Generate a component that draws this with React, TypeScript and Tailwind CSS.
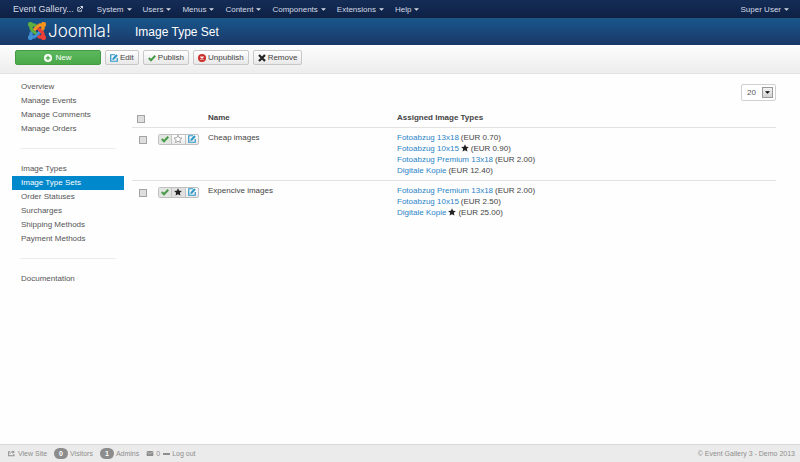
import React from "react";

type IconProps = { className?: string };

function JoomlaMark({ className }: IconProps) {
  const arm =
    "M16.719 14.759L14.22 17.26l-2.37 2.37-.462.466c-1.368 1.365-3.297 1.83-5.047 1.397-.327 1.424-1.604 2.49-3.13 2.49C1.438 23.983 0 22.547 0 20.772c0-1.518 1.055-2.789 2.469-3.123-.446-1.76.016-3.705 1.396-5.08l.179-.18 2.37 2.37-.184.181c-.769.779-.769 2.024 0 2.789.771.78 2.022.78 2.787.015l.465-.465 2.367-2.371 2.502-2.506 2.368 2.372z";
  return (
    <svg viewBox="0 0 24 24" className={className} strokeWidth="1.2" aria-hidden="true">
      <path d={arm} fill="#3f8fd6" stroke="#3f8fd6" />
      <path d={arm} fill="#5fae3f" stroke="#5fae3f" transform="rotate(90 12 12)" />
      <path d={arm} fill="#f7941e" stroke="#f7941e" transform="rotate(180 12 12)" />
      <path d={arm} fill="#ee4035" stroke="#ee4035" transform="rotate(270 12 12)" />
    </svg>
  );
}

function PlusCircle({ className }: IconProps) {
  return (
    <svg viewBox="0 0 16 16" className={className} aria-hidden="true">
      <circle cx="8" cy="8" r="8" fill="currentColor" />
      <path d="M3.5 8h9M8 3.5v9" stroke="#4fae4f" strokeWidth="2.6" />
    </svg>
  );
}

function EditIcon({ className }: IconProps) {
  return (
    <svg viewBox="0 0 16 16" className={className} fill="none" aria-hidden="true">
      <path d="M10 1.500H1.500v13h13V8" stroke="#2a96c8" strokeWidth="2.4" />
      <path d="M4.500 12l1-4L12.500.5l3 3-7 7.500z" fill="#2a96c8" />
    </svg>
  );
}

function CheckIcon({ className }: IconProps) {
  return (
    <svg viewBox="0 0 16 16" className={className} fill="none" aria-hidden="true">
      <path d="M1.500 8L6 12.500 14.500 3.500" stroke="#4a9a4a" strokeWidth="4" />
    </svg>
  );
}

function CancelIcon({ className }: IconProps) {
  return (
    <svg viewBox="0 0 16 16" className={className} aria-hidden="true">
      <circle cx="8" cy="8" r="8" fill="#c9302c" />
      <path d="M5 5l6 6M11 5l-6 6" stroke="#fff" strokeWidth="2.6" />
    </svg>
  );
}

function CrossIcon({ className }: IconProps) {
  return (
    <svg viewBox="0 0 16 16" className={className} aria-hidden="true">
      <path d="M2 2l12 12M14 2L2 14" stroke="#222" strokeWidth="4.4" />
    </svg>
  );
}

function StarIcon({ className, hollow }: IconProps & { hollow?: boolean }) {
  return (
    <svg viewBox="0 0 16 16" className={className} aria-hidden="true">
      <path
        d="M8 .4l2.300 5 5.500.6-4.100 3.700 1.200 5.500L8 12.500l-4.900 2.700 1.200-5.500L.2 6l5.500-.6z"
        fill={hollow ? "#fff" : "#222"}
        stroke={hollow ? "#888" : "none"}
        strokeWidth="1.4"
      />
    </svg>
  );
}

function OutIcon({ className }: IconProps) {
  return (
    <svg viewBox="0 0 16 16" className={className} fill="none" stroke="currentColor" aria-hidden="true">
      <path d="M7 4H2v10h10V9.5" strokeWidth="2.400" />
      <path d="M6.5 9.5L13 3" strokeWidth="2.600" />
      <path d="M8 0h8v8z" fill="currentColor" stroke="none" />
    </svg>
  );
}

function ShareIcon({ className }: IconProps) {
  return (
    <svg viewBox="0 0 16 16" className={className} fill="none" stroke="currentColor" aria-hidden="true">
      <path d="M5 4H1.500v9h12v-4" strokeWidth="2.4" />
      <path d="M5 8c1-3 3-3.500 6-3.500" strokeWidth="2" />
      <path d="M10 1l6 3.500-6 4z" fill="currentColor" stroke="none" />
    </svg>
  );
}

function MailIcon({ className }: IconProps) {
  return (
    <svg viewBox="0 0 16 12" className={className} aria-hidden="true">
      <rect width="16" height="12" rx="1.500" fill="currentColor" />
      <path d="M1 2l7 5 7-5" fill="none" stroke="#ebebeb" strokeWidth="1.200" />
    </svg>
  );
}

function Caret({ className }: IconProps) {
  return (
    <svg viewBox="0 0 8 4" className={className} aria-hidden="true">
      <path d="M0 0h8L4 4z" fill="currentColor" />
    </svg>
  );
}

const menus = ["System", "Users", "Menus", "Content", "Components", "Extensions", "Help"];

const sideGroups = [
  ["Overview", "Manage Events", "Manage Comments", "Manage Orders"],
  ["Image Types", "Image Type Sets", "Order Statuses", "Surcharges", "Shipping Methods", "Payment Methods"],
  ["Documentation"],
];

type ImageType = { name: string; price: string; isDefault?: boolean };

const sets: { name: string; isDefault: boolean; types: ImageType[] }[] = [
  {
    name: "Cheap images",
    isDefault: false,
    types: [
      { name: "Fotoabzug 13x18", price: "(EUR 0.70)" },
      { name: "Fotoabzug 10x15", price: "(EUR 0.90)", isDefault: true },
      { name: "Fotoabzug Premium 13x18", price: "(EUR 2.00)" },
      { name: "Digitale Kopie", price: "(EUR 12.40)" },
    ],
  },
  {
    name: "Expencive images",
    isDefault: true,
    types: [
      { name: "Fotoabzug Premium 13x18", price: "(EUR 2.00)" },
      { name: "Fotoabzug 10x15", price: "(EUR 2.50)" },
      { name: "Digitale Kopie", price: "(EUR 25.00)", isDefault: true },
    ],
  },
];

function ToolButton({ icon, label }: { icon: React.ReactNode; label: string }) {
  return (
    <button
      type="button"
      className="flex h-[15px] items-center gap-[2px] rounded-xs border border-[#c8c8c8] bg-linear-to-b from-white to-[#e8e8e8] px-1 text-[#444]"
    >
      {icon}
      {label}
    </button>
  );
}

function Tick({ label }: { label: string }) {
  return (
    <input
      type="checkbox"
      aria-label={label}
      className="block size-2 appearance-none border border-[#a4a4a4] bg-[#dedede] checked:bg-[#0088cc]"
    />
  );
}

export default function App() {
  return (
    <div className="flex min-h-screen flex-col bg-[#fefefe] font-['Liberation_Sans',Arial,sans-serif] text-[8px] leading-[11px] text-[#444]">
      <nav className="flex h-[18px] items-center bg-linear-to-b from-[#142c56] to-[#0e2145] pr-[11px] pl-[13px] text-[#d5dbe6]">
        <a href="#" className="flex items-center gap-[3px] text-[9px]">
          Event Gallery...
          <OutIcon className="size-[6px]" />
        </a>
        <ul className="ml-[14px] flex gap-[11px]">
          {menus.map((m) => (
            <li key={m}>
              <a href="#" className="flex items-center gap-[3px]">
                {m}
                <Caret className="h-[3px] w-[5px]" />
              </a>
            </li>
          ))}
        </ul>
        <a href="#" className="ml-auto flex items-center gap-[3px]">
          Super User
          <Caret className="h-[3px] w-[5px]" />
        </a>
      </nav>

      <header className="flex h-[27px] items-center border-t border-[#24587f] bg-linear-to-b from-[#17568c] to-[#1a3867] pl-[28px] text-white">
        <a href="#" className="flex w-[107px] items-center gap-[2px] pb-[3px]">
          <JoomlaMark className="size-[18px]" />
          <span className="font-[Inter,sans-serif] text-[17px] leading-[18px] font-light">Joomla!</span>
        </a>
        <h1 className="text-[12px] leading-[14px]">Image Type Set</h1>
      </header>

      <div className="flex h-[29px] items-start gap-1 border-b border-[#e2e2e2] bg-linear-to-b from-[#fdfdfd] to-[#ededed] pt-[5px] pl-[15px]">
        <button
          type="button"
          className="flex h-[15px] w-[86px] items-center justify-center gap-[3px] rounded-xs border border-[#459a45] bg-linear-to-b from-[#5cb85c] to-[#4aa84a] text-white"
        >
          <PlusCircle className="size-[8px]" />
          New
        </button>
        <ToolButton icon={<EditIcon className="size-[8px]" />} label="Edit" />
        <ToolButton icon={<CheckIcon className="size-[8px]" />} label="Publish" />
        <ToolButton icon={<CancelIcon className="size-[8px]" />} label="Unpublish" />
        <ToolButton icon={<CrossIcon className="size-[8px]" />} label="Remove" />
      </div>

      <div className="flex flex-1 items-start pr-6 pl-3">
        <aside className="w-[112px] shrink-0 pt-[6px]">
          {sideGroups.map((group, i) => (
            <React.Fragment key={group[0]}>
              {i > 0 && <hr className="mx-2 mt-3 mb-[13px] border-[#ececec]" />}
              <ul>
                {group.map((item) => (
                  <li key={item}>
                    <a
                      href="#"
                      className={
                        item === "Image Type Sets"
                          ? "block bg-[#0088cc] pl-[9px] leading-[14px] text-white"
                          : "block pl-[9px] leading-[14px] text-[#555]"
                      }
                    >
                      {item}
                    </a>
                  </li>
                ))}
              </ul>
            </React.Fragment>
          ))}
        </aside>

        <main className="ml-2 flex-1 pt-[10px]">
          <div className="flex justify-end">
            <div className="relative">
              <select
                aria-label="Items per page"
                defaultValue="20"
                className="block h-[17px] w-[35px] appearance-none rounded-xs border border-[#d0d0d0] bg-white pl-[5px] text-[#555]"
              >
                <option>20</option>
                <option>50</option>
                <option>100</option>
              </select>
              <span className="pointer-events-none absolute top-[3px] right-[3px] flex h-[11px] w-[11px] items-center justify-center border border-[#999] bg-linear-to-b from-[#f4f4f4] to-[#d2d2d2] text-black">
                <Caret className="h-[3px] w-[5px]" />
              </span>
            </div>
          </div>

          <table className="mt-2 w-full table-fixed border-collapse text-left">
            <thead>
              <tr className="h-[18px]">
                <th className="w-[26px] pt-[2px] pl-[5px]">
                  <Tick label="Select all" />
                </th>
                <th className="w-[50px]" />
                <th className="w-[189px]">Name</th>
                <th>Assigned Image Types</th>
              </tr>
            </thead>
            <tbody>
              {sets.map((s) => (
                <tr key={s.name} className="border-t border-[#e2e2e2] align-top">
                  <td className="pt-2 pl-[7px]">
                    <Tick label={"Select " + s.name} />
                  </td>
                  <td className="pt-[6px]">
                    <div className="flex h-[11px] w-[41px] divide-x divide-[#c4c4c4] overflow-hidden rounded-xs border border-[#c0c0c0] bg-linear-to-b from-white to-[#e8e8e8]">
                      <button type="button" aria-label="Published" className="flex flex-1 items-center justify-center bg-[#e2e6e0]">
                        <CheckIcon className="size-[8px]" />
                      </button>
                      <button
                        type="button"
                        aria-label="Default"
                        className={
                          s.isDefault
                            ? "flex flex-1 items-center justify-center bg-[#e0e0e0]"
                            : "flex flex-1 items-center justify-center"
                        }
                      >
                        <StarIcon className="size-[8px]" hollow={!s.isDefault} />
                      </button>
                      <button type="button" aria-label="Edit set" className="flex flex-1 items-center justify-center">
                        <EditIcon className="size-[8px]" />
                      </button>
                    </div>
                  </td>
                  <td className="py-1">{s.name}</td>
                  <td className="py-1">
                    <ul>
                      {s.types.map((t) => (
                        <li key={t.name} className="flex items-center gap-[2px]">
                          <a href="#" className="text-[#2a84c6]">
                            {t.name}
                          </a>
                          {t.isDefault && <StarIcon className="size-[8px]" />}
                          <span>{t.price}</span>
                        </li>
                      ))}
                    </ul>
                  </td>
                </tr>
              ))}
            </tbody>
          </table>
        </main>
      </div>

      <footer className="flex h-[18px] items-center gap-[7px] border-t border-[#d8d8d8] bg-[#ebebeb] pr-[5px] pl-[8px] text-[7px] text-[#8e8e8e]">
        <a href="#" className="flex items-center gap-[3px]">
          <ShareIcon className="size-[7px]" />
          View Site
        </a>
        <span className="flex items-center gap-[2px]">
          <span className="flex h-[11px] w-[14px] items-center justify-center rounded-full bg-[#8c8c8c] font-bold text-white">0</span>
          Visitors
        </span>
        <span className="flex items-center gap-[2px]">
          <span className="flex h-[11px] w-[14px] items-center justify-center rounded-full bg-[#8c8c8c] font-bold text-white">1</span>
          Admins
        </span>
        <span className="flex items-center gap-[3px]">
          <a href="#" className="flex items-center gap-[2px]">
            <MailIcon className="h-[5px] w-[8px]" />0
          </a>
          <a href="#" className="flex items-center gap-[2px]">
            <span className="h-[2px] w-[7px] bg-current" />
            Log out
          </a>
        </span>
        <span className="ml-auto">© Event Gallery 3 - Demo 2013</span>
      </footer>
    </div>
  );
}
